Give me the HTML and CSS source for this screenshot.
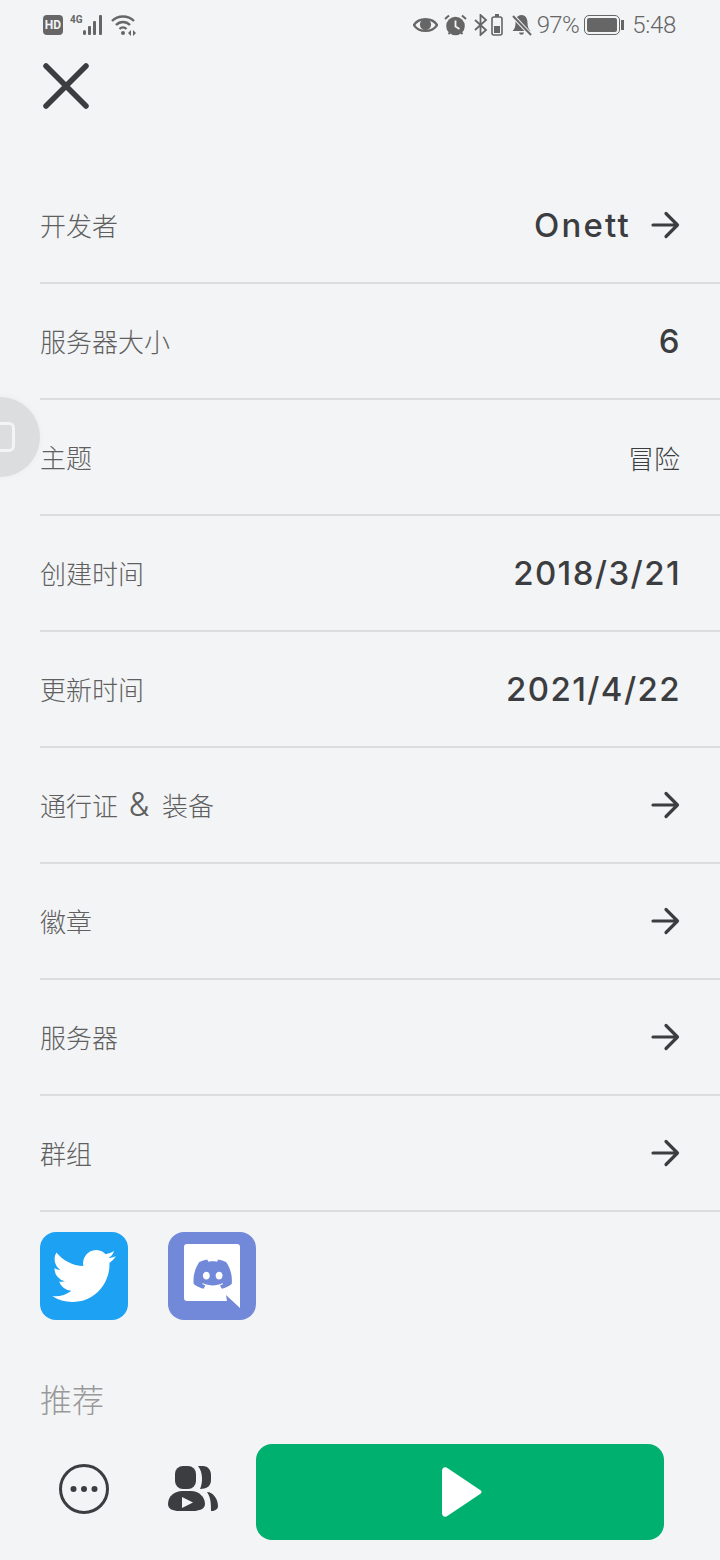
FILE: index.html
```html
<!DOCTYPE html>
<html lang="en">
<head>
  <meta charset="UTF-8" />
  <meta name="viewport" content="width=device-width, initial-scale=1.0"/>
  <title>详情</title>
  <link rel="stylesheet" href="styles.css">
</head>
<body>

  <!-- Status bar -->
  <div class="status-bar">
    <div class="status-left">
      <span class="hd-badge">HD</span>
      <span class="net-label">4G</span>
      <svg class="signal" width="22" height="22" viewBox="0 0 22 22" fill="#666">
        <rect x="0" y="16" width="3" height="5" rx="1.5"/>
        <rect x="5" y="12" width="3" height="9" rx="1"/>
        <rect x="10" y="7" width="3" height="14" rx="1"/>
        <rect x="16" y="1" width="3" height="20" rx="1"/>
      </svg>
      <svg class="wifi" width="26" height="22" viewBox="0 0 26 22" fill="none" stroke="#666" stroke-width="2.4">
        <path d="M1 7C7 1 17 1 23 7"/>
        <path d="M5 11C9 7 15 7 19 11"/>
        <path d="M8.500 15C10.500 13 13.500 13 15.500 15"/>
        <circle cx="12" cy="19" r="2" fill="#666" stroke="none"/>
        <path d="M20 16l-3 3 3 3zM22 16l3 3-3 3z" fill="#666" stroke="none"/>
      </svg>
    </div>
    <div class="status-right">
      <svg width="25" height="20" viewBox="0 0 26 20">
        <path d="M1 10C6 2 20 2 25 10C20 18 6 18 1 10Z" fill="none" stroke="#666" stroke-width="2.400"/>
        <circle cx="13" cy="9.500" r="5.800" fill="#666"/>
      </svg>
      <svg class="icon-alarm" width="23" height="22" viewBox="0 0 23 22">
        <circle cx="11.500" cy="12" r="9.300" fill="#666"/>
        <path d="M11.500 6.500V12.500L15.500 15" fill="none" stroke="#f3f4f6" stroke-width="1.800"/>
        <path d="M1 5L5 1.500M22 5L18 1.500M4.500 20L6 18.500M18.500 20L17 18.500" stroke="#666" stroke-width="2"/>
      </svg>
      <svg class="icon-bt" width="14" height="22" viewBox="0 0 14 22" fill="none" stroke="#666" stroke-width="1.800">
        <path d="M1 6L12 16L6.500 21V1L12 6L1 16"/>
      </svg>
      <svg class="icon-smallbat" width="12" height="22" viewBox="0 0 12 22">
        <rect x="4" y="0" width="4" height="3" fill="#666"/>
        <rect x="1" y="3" width="10" height="18" rx="2" fill="none" stroke="#666" stroke-width="1.600"/>
        <rect x="3" y="12" width="6" height="7" fill="#666"/>
      </svg>
      <svg class="icon-bell" width="21" height="22" viewBox="0 0 21 22">
        <path d="M10.500 1C6 1 4.500 5 4.500 9C4.500 13 3.500 15 1.500 17H19.500C17.500 15 16.500 13 16.500 9C16.500 5 15 1 10.500 1Z" fill="#666"/>
        <path d="M8 18.500C8.500 21.500 12.500 21.500 13 18.500Z" fill="#666"/>
        <path d="M2 2L20 21" stroke="#f3f4f6" stroke-width="4"/>
        <path d="M2 2L20 21" stroke="#666" stroke-width="2"/>
      </svg>
      <span class="battery-text">97%</span>
      <span class="battery"><span class="battery-fill"></span></span>
      <span class="battery-cap"></span>
      <span class="clock">5:48</span>
    </div>
  </div>

  <!-- Close -->
  <div class="top-bar">
    <svg width="48" height="48" viewBox="0 0 48 48" fill="none" stroke="#3c3d40" stroke-width="5.500" stroke-linecap="round">
      <path d="M4 4L44 44M44 4L4 44"/>
    </svg>
  </div>

  <!-- Info rows -->
  <div class="info-list">
    <div class="info-row">
      <span class="info-label">开发者</span>
      <span class="info-value name">Onett</span>
      <svg class="arrow" width="30" height="28" viewBox="0 0 30 28" fill="none" stroke="#3c3d40" stroke-width="3.200" stroke-linecap="round" stroke-linejoin="round"><path d="M3 14H27.500M16 2.500L27.500 14L16 25.500"/></svg>
    </div>
    <div class="info-row">
      <span class="info-label">服务器大小</span>
      <span class="info-value">6</span>
    </div>
    <div class="info-row">
      <span class="info-label">主题</span>
      <span class="info-value cjk">冒险</span>
    </div>
    <div class="info-row">
      <span class="info-label">创建时间</span>
      <span class="info-value">2018/3/21</span>
    </div>
    <div class="info-row">
      <span class="info-label">更新时间</span>
      <span class="info-value">2021/4/22</span>
    </div>
    <div class="info-row">
      <span class="info-label">通行证 <span class="amp">&amp;</span> 装备</span>
      <svg class="arrow" width="30" height="28" viewBox="0 0 30 28" fill="none" stroke="#3c3d40" stroke-width="3.200" stroke-linecap="round" stroke-linejoin="round"><path d="M3 14H27.500M16 2.500L27.500 14L16 25.500"/></svg>
    </div>
    <div class="info-row">
      <span class="info-label">徽章</span>
      <svg class="arrow" width="30" height="28" viewBox="0 0 30 28" fill="none" stroke="#3c3d40" stroke-width="3.200" stroke-linecap="round" stroke-linejoin="round"><path d="M3 14H27.500M16 2.500L27.500 14L16 25.500"/></svg>
    </div>
    <div class="info-row">
      <span class="info-label">服务器</span>
      <svg class="arrow" width="30" height="28" viewBox="0 0 30 28" fill="none" stroke="#3c3d40" stroke-width="3.200" stroke-linecap="round" stroke-linejoin="round"><path d="M3 14H27.500M16 2.500L27.500 14L16 25.500"/></svg>
    </div>
    <div class="info-row">
      <span class="info-label">群组</span>
      <svg class="arrow" width="30" height="28" viewBox="0 0 30 28" fill="none" stroke="#3c3d40" stroke-width="3.200" stroke-linecap="round" stroke-linejoin="round"><path d="M3 14H27.500M16 2.500L27.500 14L16 25.500"/></svg>
    </div>
  </div>

  <!-- Social links -->
  <div class="social-links">
    <div class="social-btn twitter">
      <svg width="64" height="64" viewBox="0 0 24 24" fill="#fff">
        <path d="M23.953 4.57a10 10 0 01-2.825.775 4.958 4.958 0 002.163-2.723c-.951.555-2.005.959-3.127 1.184a4.92 4.92 0 00-8.384 4.482C7.69 8.095 4.067 6.13 1.64 3.162a4.822 4.822 0 00-.666 2.475c0 1.71.87 3.213 2.188 4.096a4.904 4.904 0 01-2.228-.616v.06a4.923 4.923 0 003.946 4.827 4.996 4.996 0 01-2.212.085 4.936 4.936 0 004.604 3.417 9.867 9.867 0 01-6.102 2.105c-.39 0-.779-.023-1.17-.067a13.995 13.995 0 007.557 2.209c9.053 0 13.998-7.496 13.998-13.985 0-.21 0-.42-.015-.63A9.935 9.935 0 0024 4.59z"/>
      </svg>
    </div>
    <div class="social-btn discord">
      <svg width="56" height="64" viewBox="0 0 56 64">
        <path d="M3 0H53C55 0 56 1 56 3V64L42 51L43 57H3C1 57 0 56 0 54V3C0 1 1 0 3 0Z" fill="#fff"/>
        <g transform="translate(9.500 11) scale(1.600)">
          <path fill="#7289da" d="M20.317 4.3698a19.7913 19.7913 0 00-4.8851-1.5152.0741.0741 0 00-.0785.0371c-.211.3753-.4447.8648-.6083 1.2495-1.8447-.2762-3.68-.2762-5.4868 0-.1636-.3933-.4058-.8742-.6177-1.2495a.077.077 0 00-.0785-.037 19.7363 19.7363 0 00-4.8852 1.515.0699.0699 0 00-.0321.0277C.5334 9.0458-.319 13.5799.0992 18.0578a.0824.0824 0 00.0312.0561c2.0528 1.5076 4.0413 2.4228 5.9929 3.0294a.0777.0777 0 00.0842-.0276c.4616-.6304.8731-1.2952 1.226-1.9942a.076.076 0 00-.0416-.1057c-.6528-.2476-1.2743-.5495-1.8722-.8923a.077.077 0 01-.0076-.1277c.1258-.0943.2517-.1923.3718-.2914a.0743.0743 0 01.0776-.0105c3.9278 1.7933 8.18 1.7933 12.0614 0a.0739.0739 0 01.0785.0095c.1202.099.246.1981.3728.2924a.077.077 0 01-.0066.1276 12.2986 12.2986 0 01-1.873.8914.0766.0766 0 00-.0407.1067c.3604.698.7719 1.3628 1.225 1.9932a.076.076 0 00.0842.0286c1.961-.6067 3.9495-1.5219 6.0023-3.0294a.077.077 0 00.0313-.0552c.5004-5.177-.8382-9.6739-3.5485-13.6604a.061.061 0 00-.0312-.0286zM8.02 15.3312c-1.1825 0-2.1569-1.0857-2.1569-2.419 0-1.3332.9555-2.4189 2.157-2.4189 1.2108 0 2.1757 1.0952 2.1568 2.419 0 1.3332-.9555 2.4189-2.1569 2.4189zm7.9748 0c-1.1825 0-2.1569-1.0857-2.1569-2.419 0-1.3332.9554-2.4189 2.1569-2.4189 1.2108 0 2.1757 1.0952 2.1568 2.419 0 1.3332-.946 2.4189-2.1568 2.4189Z"/>
        </g>
      </svg>
    </div>
  </div>

  <h2 class="section-title">推荐</h2>

  <!-- Bottom actions -->
  <div class="action-bar">
    <svg class="more-icon" width="50" height="50" viewBox="0 0 50 50">
      <circle cx="25" cy="25" r="23.500" fill="none" stroke="#3c3d40" stroke-width="3"/>
      <circle cx="14.500" cy="25" r="3" fill="#3c3d40"/>
      <circle cx="25" cy="25" r="3" fill="#3c3d40"/>
      <circle cx="35.500" cy="25" r="3" fill="#3c3d40"/>
    </svg>
    <svg class="friends-icon" width="52" height="46" viewBox="0 0 52 46" fill="#3c3d40">
      <rect x="8" y="0" width="21" height="23" rx="8"/>
      <path d="M31 0H36C41 0 44 4 44 9V14C44 19 41 23 33 23C36 17 36 6 31 0Z"/>
      <path d="M1 38C1 30 8 25 15 25H24C32 25 38 31 38 38C38 43 32 45 26 45H12C6 45 1 43 1 38Z"/>
      <path d="M40 26C46 26 51 33 51 40C51 43 49 44 46 45L44 45C44 38 44 32 40 26Z"/>
      <path d="M15 31V42L26 36.500Z" fill="#f3f4f6"/>
    </svg>
    <div class="play-btn">
      <svg width="40" height="50" viewBox="0 0 42 52" fill="#fff">
        <path d="M0 4C0 0.500 3 -1 6 1L40 24C42 25 42 27 40 28L6 51C3 53 0 51.500 0 48Z"/>
      </svg>
    </div>
  </div>

  <!-- Floating assistant button -->
  <div class="float-btn"><span class="float-btn-inner"></span></div>

</body>
</html>
```

FILE: styles.css
```css
/* Basic Reset */
* {
  margin: 0;
  padding: 0;
  box-sizing: border-box;
}

body {
  position: relative;
  width: 720px;
  height: 1560px;
  overflow: hidden;
  background: #f3f4f6;
  color: #3c3d40;
  font-family: "Noto Sans CJK SC", "Noto Sans", sans-serif;
}

/* Status bar */
.status-bar {
  display: flex;
  justify-content: space-between;
  align-items: center;
  height: 50px;
  padding: 0 44px 0 43px;
  color: #666;
}

.status-left,
.status-right {
  display: flex;
  align-items: center;
}

.hd-badge {
  width: 20px;
  height: 20px;
  border-radius: 4px;
  background: #666;
  color: #f3f4f6;
  font: 700 12px/20px "Roboto", sans-serif;
  text-align: center;
}

.net-label {
  align-self: flex-start;
  margin: 1px 0 0 7px;
  font: 700 10px/10px "Roboto", sans-serif;
}

.wifi {
  margin-left: 6px;
}

.icon-alarm {
  margin-left: 6px;
}

.icon-bt {
  margin-left: 7px;
}

.icon-smallbat {
  margin-left: 3px;
}

.icon-bell {
  margin-left: 8px;
}

.battery-text,
.clock {
  font: 300 24px/30px "Roboto", sans-serif;
}

.battery-text {
  margin-left: 5px;
  letter-spacing: -0.6px;
}

.battery {
  display: block;
  width: 36px;
  height: 20px;
  margin-left: 5px;
  padding: 2px;
  border: 1.5px solid #666;
  border-radius: 5px;
}

.battery-fill {
  display: block;
  height: 100%;
  border-radius: 2px;
  background: #666;
}

.battery-cap {
  width: 3px;
  height: 10px;
  margin-left: 1px;
  background: #666;
}

.clock {
  margin-left: 8px;
  letter-spacing: -0.3px;
}

/* Close */
.top-bar {
  height: 118px;
  padding: 12px 0 0 42px;
}

.top-bar svg {
  display: block;
}

/* Info rows */
.info-list {
  margin-left: 40px;
}

.info-row {
  display: flex;
  align-items: center;
  height: 116px;
  padding-right: 40px;
  border-bottom: 2px solid #dcddde;
}

.info-label {
  flex: 1;
  font-size: 26px;
  line-height: 38px;
  font-weight: 300;
  color: #5f5f5f;
}

.amp {
  margin: 0 7px 0 5px;
  font-family: "Inter", sans-serif;
  font-size: 33px;
  line-height: 30px;
  font-weight: 300;
}

.info-value {
  margin-right: -1px;
  font-family: "Inter", sans-serif;
  font-size: 33px;
  font-weight: 500;
  letter-spacing: 1.400px;
  color: #3c3d40;
}

.info-value.name {
  margin-right: 0;
  letter-spacing: 2.200px;
}

.info-value.cjk {
  margin-right: 0;
  font-family: "Noto Sans CJK SC", sans-serif;
  font-size: 26px;
  font-weight: 300;
  letter-spacing: 0;
}

.arrow {
  flex: none;
}

.info-value + .arrow {
  margin-left: 19px;
}

/* Social links */
.social-links {
  display: flex;
  gap: 40px;
  padding: 20px 0 0 40px;
}

.social-btn {
  display: flex;
  align-items: center;
  justify-content: center;
  width: 88px;
  height: 88px;
  border-radius: 16px;
}

.twitter {
  background: #1da1f2;
}

.discord {
  background: #7289da;
}

.section-title {
  margin: 55px 0 0 40px;
  font-size: 32px;
  line-height: 46px;
  font-weight: 300;
  color: #999;
}

/* Bottom actions */
.action-bar {
  display: flex;
  align-items: center;
  margin-top: 23px;
  padding: 0 56px 0 59px;
}

.more-icon,
.friends-icon {
  margin-bottom: 7px;
}

.friends-icon {
  margin-left: 58px;
}

.play-btn {
  flex: 1;
  display: flex;
  align-items: center;
  justify-content: center;
  height: 96px;
  margin-left: 37px;
  padding-left: 4px;
  border-radius: 16px;
  background: #00b06f;
}

/* Floating assistant button */
.float-btn {
  position: absolute;
  left: -40px;
  top: 397px;
  display: flex;
  align-items: center;
  justify-content: center;
  width: 80px;
  height: 80px;
  border-radius: 50%;
  background: #dcddde;
  box-shadow: 0 0 6px rgba(0, 0, 0, 0.04);
}

.float-btn-inner {
  width: 30px;
  height: 30px;
  border: 3px solid #f3f4f6;
  border-radius: 6px;
}
```
